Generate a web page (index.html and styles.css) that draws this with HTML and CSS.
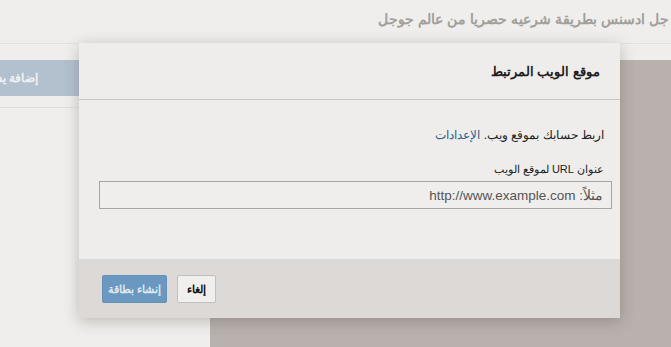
FILE: index.html
```html
<!DOCTYPE html>
<html lang="ar">
<head>
<meta charset="utf-8">
<link rel="stylesheet" href="styles.css">
</head>
<body>
<div class="page">
  <header class="topbar">
    <h1 class="page-title">جل ادسنس بطريقة شرعيه حصريا من عالم جوجل</h1>
  </header>
  <div class="main">
    <aside class="sidebar">
      <div class="add-btn"><span class="add-text">إضافة يدوياً</span></div>
      <div class="side-line"></div>
    </aside>
    <section class="content"></section>
  </div>

  <div class="dialog" dir="rtl">
    <div class="dialog-head">موقع الويب المرتبط</div>
    <div class="dialog-body">
      <p class="intro">اربط حسابك بموقع ويب. <a class="link" href="#">الإعدادات</a></p>
      <p class="label">عنوان URL لموقع الويب</p>
      <div class="input">مثلاً: http://www.example.com</div>
    </div>
    <div class="dialog-foot" dir="ltr">
      <button class="btn btn-primary">إنشاء بطاقة</button>
      <button class="btn btn-cancel">إلغاء</button>
    </div>
  </div>
</div>
</body>
</html>
```

FILE: styles.css
```css
html, body {
  margin: 0;
  padding: 0;
}
body {
  width: 671px;
  height: 347px;
  overflow: hidden;
  background: #efeeec;
  font-family: "Liberation Sans", Arial, sans-serif;
}
.page {
  position: relative;
  width: 671px;
  height: 347px;
  overflow: hidden;
}
.topbar {
  height: 43px;
  border-bottom: 1px solid #e3e1df;
  display: flex;
  justify-content: flex-end;
  align-items: center;
  overflow: hidden;
}
.page-title {
  margin: 0 2px 0 0;
  white-space: nowrap;
  direction: rtl;
  font-size: 14.2px;
  font-weight: bold;
  color: #a19f9c;
  padding-bottom: 6px;
}
.main {
  display: flex;
  height: 303px;
}
.sidebar {
  width: 210px;
  padding-top: 16px;
}
.add-btn {
  width: 150px;
  height: 36px;
  background: #b3c1cf;
  color: #eef1f4;
  font-size: 12px;
  font-weight: bold;
  display: flex;
  align-items: center;
  justify-content: flex-start;
  direction: rtl;
  box-sizing: border-box;
  padding-right: 112px;
  overflow: hidden;
}
.add-text {
  white-space: nowrap;
}
.side-line {
  margin-top: 11px;
  height: 1px;
  background: #e0dedc;
}
.content {
  flex: 1;
  margin-top: 16px;
  background: #b8b1ad;
}
.dialog {
  position: absolute;
  left: 79px;
  top: 43px;
  width: 541px;
  height: 275px;
  background: #eeedeb;
  box-shadow: 0 3px 14px rgba(60, 50, 40, 0.28);
  display: flex;
  flex-direction: column;
}
.dialog-head {
  height: 55px;
  border-bottom: 1px solid #c8c6c4;
  display: flex;
  align-items: center;
  padding-right: 20px;
  font-size: 13px;
  font-weight: bold;
  color: #1e1e1e;
  padding-top: 1px;
}
.dialog-body {
  flex: 1;
  padding: 27px 8px 0 20px;
}
.intro {
  margin: 0 8px 0 0;
  font-size: 12px;
  line-height: 16px;
  color: #222;
}
.link {
  color: #2f5f8f;
  text-decoration: none;
}
.label {
  margin: 19px 8px 0 0;
  font-size: 11px;
  line-height: 14px;
  color: #222;
}
.input {
  margin-top: 5px;
  height: 26px;
  border: 1px solid #a7a5a3;
  background: #efeeec;
  display: flex;
  align-items: center;
  padding-right: 8px;
  font-size: 13.5px;
  color: #555;
}
.dialog-foot {
  height: 59px;
  background: #dcd9d6;
  display: flex;
  align-items: flex-start;
  padding: 16px 0 0 23px;
  box-sizing: border-box;
  gap: 10px;
}
.btn {
  height: 28px;
  margin: 0;
  border-radius: 2px;
  font-family: "Liberation Sans", Arial, sans-serif;
  font-size: 11px;
  font-weight: bold;
  padding: 0;
  direction: rtl;
}
.btn-primary {
  width: 65px;
  background: #6a98c0;
  border: 1px solid #6590b8;
  color: #dfe8f0;
}
.btn-cancel {
  width: 39px;
  background: #f0efed;
  border: 1px solid #c2bfbc;
  color: #111;
}
```
